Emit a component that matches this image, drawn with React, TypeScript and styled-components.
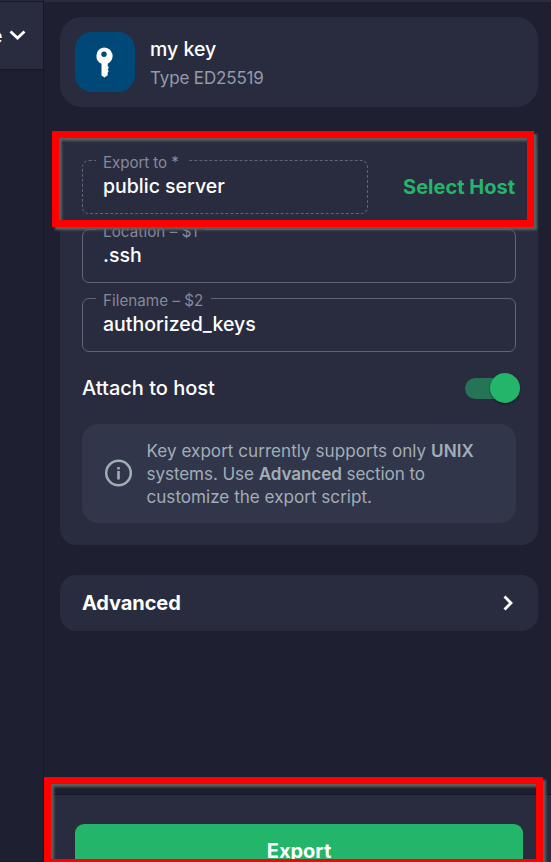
import React from 'react';
import styled, { createGlobalStyle } from 'styled-components';

const color = {
  page: '#1e2032',
  card: '#292c3f',
  note: '#32364a',
  divider: '#16182a',
  outline: '#626475',
  label: '#85889b',
  muted: '#969aaa',
  noteText: '#a0aeb7',
  accent: '#23b569',
};

const GlobalStyle = createGlobalStyle`
  * { box-sizing: border-box; }
  body { margin: 0; background: ${color.page}; overflow: hidden; }
`;

const Page = styled.div`
  position: relative;
  display: flex;
  width: 551px;
  height: 862px;
  overflow: hidden;
  background: ${color.page};
  color: #fff;
  font-family: Inter, 'Liberation Sans', sans-serif;
`;

const Sidebar = styled.aside`
  flex: 0 0 44px;
  border-right: 1px solid ${color.divider};
  border-bottom: 1px solid ${color.divider};
`;

const SidebarTab = styled.div`
  display: flex;
  align-items: center;
  height: 70px;
  overflow: hidden;
  padding-top: 2px;
  border-bottom: 1px solid ${color.divider};
  background: linear-gradient(${color.card} 1px, ${color.divider} 1px 2px, ${color.card} 2px);
  font-size: 19.5px;
  font-weight: 500;

  span { margin-left: -9px; }
  svg { margin: 0 0 2px 7px; flex: none; }
`;

const Panel = styled.main`
  flex: 1;
  display: flex;
  flex-direction: column;
  border-top: 2px solid ${color.card};
`;

const Content = styled.div`
  display: flex;
  flex-direction: column;
  gap: 30px;
  padding: 15px 13px 0 16px;
`;

const Card = styled.section`
  border-radius: 16px;
  background: ${color.card};
`;

const KeyCard = styled(Card)`
  display: flex;
  align-items: center;
  gap: 15px;
  height: 90px;
  padding: 0 15px;
  border-radius: 22px;
`;

const KeyIcon = styled.div`
  display: flex;
  align-items: center;
  justify-content: center;
  width: 60px;
  height: 60px;
  padding-right: 2px;
  border-radius: 17px;
  background: #004878;
`;

const KeyText = styled.div`
  padding-top: 2px;
`;

const KeyName = styled.div`
  font-size: 19.5px;
  font-weight: 500;
  line-height: 29px;
`;

const KeyType = styled.div`
  font-size: 17px;
  line-height: 28px;
  letter-spacing: -0.15px;
  color: ${color.muted};
`;

const FormCard = styled(Card)`
  height: 408px;
  padding: 23px 22px 22px;
`;

const HostRow = styled.div`
  display: flex;
  align-items: center;
  justify-content: space-between;
  margin-bottom: 15px;
`;

const Field = styled.div<{ $dashed?: boolean }>`
  height: 54px;
  width: ${(p) => (p.$dashed ? '286px' : '100%')};
  margin-bottom: ${(p) => (p.$dashed ? 0 : '15px')};
  padding-left: 13px;
  border: 1px ${(p) => (p.$dashed ? 'dashed' : 'solid')} ${color.outline};
  border-radius: 7px;
`;

const FieldLabel = styled.div<{ $notch: number; $spacing?: number }>`
  width: ${(p) => p.$notch}px;
  height: 16px;
  margin-top: -6px;
  padding-left: 7px;
  background: ${color.card};
  color: ${color.label};
  font-size: 15.2px;
  line-height: 16px;
  letter-spacing: ${(p) => p.$spacing ?? 0}px;
  white-space: nowrap;
`;

const FieldValue = styled.div`
  padding-left: 7px;
  font-size: 19.5px;
  font-weight: 500;
  line-height: 31px;
`;

const TextButton = styled.button`
  padding: 0 1px;
  border: 0;
  background: none;
  color: ${color.accent};
  font: 700 20px/28px Inter, sans-serif;
`;

const ToggleRow = styled.div`
  display: flex;
  align-items: center;
  justify-content: space-between;
  height: 42px;
  font-size: 20px;
  font-weight: 500;
`;

const Switch = styled.div`
  display: flex;
  align-items: center;
  justify-content: flex-end;
  width: 55px;
  height: 21px;
  margin-right: -4px;
  border-radius: 11px;
  background: #257456;
`;

const SwitchThumb = styled.div`
  width: 30px;
  height: 30px;
  border-radius: 50%;
  background: ${color.accent};
  box-shadow: 0 1px 2px rgba(0, 0, 0, 0.5);
`;

const Note = styled.div`
  display: flex;
  align-items: center;
  gap: 14.5px;
  height: 99px;
  margin-top: 15px;
  padding-left: 22px;
  border-radius: 16px;
  background: ${color.note};
  color: ${color.noteText};
  font-size: 17.1px;
  line-height: 23px;
  white-space: nowrap;

  svg { flex: none; margin-bottom: 2px; }
  b { font-weight: 600; }
`;

const NoteLine = styled.div<{ $spacing?: number }>`
  letter-spacing: ${(p) => p.$spacing ?? 0}px;
`;

const AdvancedCard = styled(Card)`
  display: flex;
  align-items: center;
  justify-content: space-between;
  height: 56px;
  padding: 0 24px 0 22px;
  font-size: 20px;
  font-weight: 700;
  letter-spacing: -0.1px;
`;

const Footer = styled.footer`
  height: 68px;
  margin-top: auto;
  padding: 29px 28px 0 31px;
  overflow: hidden;
  border-top: 1px solid ${color.divider};
  background: ${color.card};
`;

const ExportButton = styled.button`
  display: block;
  width: 100%;
  height: 54px;
  padding: 0;
  border: 0;
  border-radius: 9px;
  background: ${color.accent};
  color: #fff;
  font: 700 20px/54px Inter, sans-serif;
`;

const Highlight = styled.div<{ $x: number; $y: number; $w: number; $h: number }>`
  position: absolute;
  left: ${(p) => p.$x}px;
  top: ${(p) => p.$y}px;
  width: ${(p) => p.$w}px;
  height: ${(p) => p.$h}px;
  border: 7px solid #f00;
  filter: drop-shadow(3px 3px 1px #5c5e5e);
  pointer-events: none;
`;

export default function App() {
  return (
    <Page>
      <GlobalStyle />
      <Sidebar>
        <SidebarTab>
          <span>e</span>
          <svg width="17" height="12" viewBox="0 0 17 12" fill="none" stroke="#fff" strokeWidth="2.8">
            <path d="M1.5 2.5 8.5 9 15.5 2.5" />
          </svg>
        </SidebarTab>
      </Sidebar>
      <Panel>
        <Content>
          <KeyCard>
            <KeyIcon>
              <svg width="18" height="31" viewBox="0 0 18 31">
                <path
                  fill="#fff"
                  fillRule="evenodd"
                  d="M9 .5a8.5 8.5 0 0 1 3.7 16.2v2.1l1.2 1.8-1.2 1.8 1 1.6-1 1.5v2.8L9.5 30.5 6.5 28.5V16.7A8.5 8.5 0 0 1 9 .5ZM9 4.6a2.7 2.7 0 1 0 0 5.4 2.7 2.7 0 0 0 0-5.4Z"
                />
              </svg>
            </KeyIcon>
            <KeyText>
              <KeyName>my key</KeyName>
              <KeyType>Type ED25519</KeyType>
            </KeyText>
          </KeyCard>
          <FormCard>
            <HostRow>
              <Field $dashed>
                <FieldLabel $notch={92} $spacing={-0.1}>Export to *</FieldLabel>
                <FieldValue>public server</FieldValue>
              </Field>
              <TextButton>Select Host</TextButton>
            </HostRow>
            <Field>
              <FieldLabel $notch={109} $spacing={0.08}>Location – $1</FieldLabel>
              <FieldValue>.ssh</FieldValue>
            </Field>
            <Field>
              <FieldLabel $notch={115} $spacing={0.03}>Filename – $2</FieldLabel>
              <FieldValue>authorized_keys</FieldValue>
            </Field>
            <ToggleRow>
              Attach to host
              <Switch>
                <SwitchThumb />
              </Switch>
            </ToggleRow>
            <Note>
              <svg width="28" height="28" viewBox="0 0 28 28" fill="none" stroke={color.noteText}>
                <circle cx="14.5" cy="14" r="12.3" strokeWidth="2.5" />
                <path d="M14.5 12v8.5M14.5 8v2.5" strokeWidth="2.6" />
              </svg>
              <div>
                <NoteLine $spacing={0.02}>
                  Key export currently supports only <b>UNIX</b>
                </NoteLine>
                <NoteLine $spacing={-0.09}>
                  systems. Use <b>Advanced</b> section to
                </NoteLine>
                <NoteLine>customize the export script.</NoteLine>
              </div>
            </Note>
          </FormCard>
          <AdvancedCard>
            Advanced
            <svg width="12" height="18" viewBox="0 0 12 18" fill="none" stroke="#fff" strokeWidth="2.8">
              <path d="M2.5 2.5 9 9 2.5 15.5" />
            </svg>
          </AdvancedCard>
        </Content>
        <Footer>
          <ExportButton>Export</ExportButton>
        </Footer>
      </Panel>
      <Highlight $x={52} $y={131} $w={482} $h={96} />
      <Highlight $x={44} $y={777} $w={499} $h={89} />
    </Page>
  );
}
